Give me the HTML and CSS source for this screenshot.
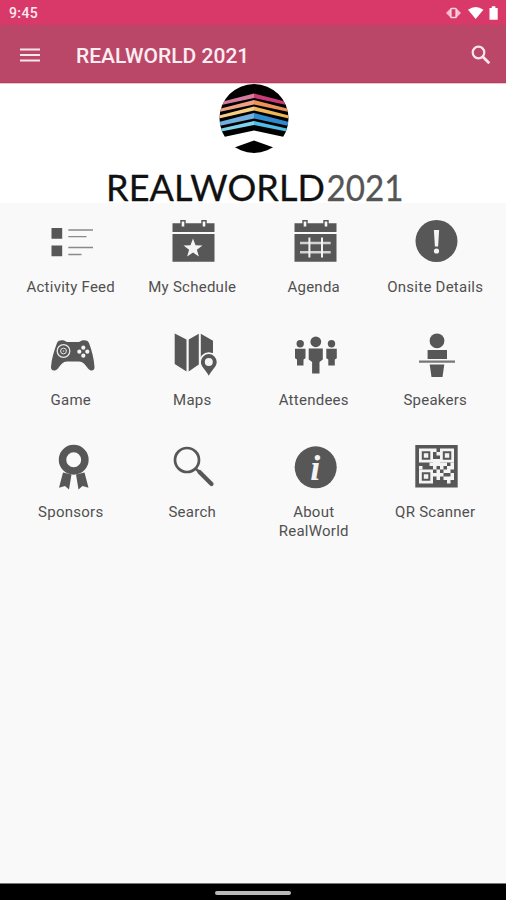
FILE: index.html
```
<!DOCTYPE html>
<html lang="en">
<head>
  <meta charset="UTF-8" />
  <meta name="viewport" content="width=device-width, initial-scale=1.0"/>
  <title>RealWorld 2021</title>
  <link rel="stylesheet" href="styles.css">
</head>
<body>
  <div class="status-bar">
    <span class="time">9:45</span>
    <svg class="status-icons" width="54" height="16" viewBox="0 0 54 16">
      <path d="M1 8 5 4v8zM16 8 12 4v8z" fill="#f9bdd0"/>
      <rect x="5.800" y="3.500" width="5.400" height="9" rx=".8" fill="none" stroke="#fbd3df" stroke-width="1.600"/>
      <path d="M23 4.800q7.700-5.500 15.400 0L30.700 14z" fill="#fff"/>
      <path d="M44.500 3h2.300V1.300h3.600V3h2.300V14.800H44.500z" fill="#fff"/>
    </svg>
  </div>

  <header class="app-bar">
    <svg class="menu-icon" width="20" height="14" viewBox="0 0 20 14">
      <path d="M0 1.500h20M0 7h20M0 12.500h20" stroke="#fbe6ec" stroke-width="2"/>
    </svg>
    <h1>REALWORLD 2021</h1>
    <svg class="search-icon" width="20" height="20" viewBox="0 0 20 20" fill="none" stroke="#fbe6ec">
      <circle cx="7.500" cy="7.500" r="5.800" stroke-width="2.200"/>
      <path d="M11.800 11.800 18.300 18.300" stroke-width="2.700"/>
    </svg>
  </header>

  <div class="banner">
    <svg class="logo" width="70" height="70" viewBox="0 0 70 70">
      <defs>
        <clipPath id="disc"><circle cx="35" cy="34.500" r="34.500"/></clipPath>
      </defs>
      <g clip-path="url(#disc)">
        <path d="M0 0H70V54L35 46.500 0 54z" fill="#000"/>
        <path d="M0 18.500 35 9.500V14L0 21.500z" fill="#d57a9c"/>
        <path d="M70 18.500 35 9.500V14L70 21.500z" fill="#c93a76"/>
        <path d="M0 25 35 16V20.500L0 28z" fill="#f0a182"/>
        <path d="M70 25 35 16V20.500L70 28z" fill="#ee925a"/>
        <path d="M0 31.500 35 22.500V26.500L0 34.500z" fill="#f6cd82"/>
        <path d="M70 31.500 35 22.500V26.500L70 34.500z" fill="#f2b757"/>
        <path d="M0 38 35 29V34.500L0 42z" fill="#70afdf"/>
        <path d="M70 38 35 29V34.500L70 42z" fill="#318acb"/>
        <path d="M0 45 35 37V41L0 48z" fill="#80d3ee"/>
        <path d="M70 45 35 37V41L70 48z" fill="#51bce4"/>
        <path d="M14 64 35 56.500 56 64V70H14z" fill="#000"/>
      </g>
    </svg>
    <svg class="wordmark" width="300" height="30" viewBox="0 0 300 30">
      <text x="1" y="27" textLength="219" fill="#111" stroke="#111">REALWORLD</text>
      <text x="221.500" y="27" textLength="77" lengthAdjust="spacingAndGlyphs" fill="#555" stroke="#555">2021</text>
    </svg>
  </div>

  <main class="menu">
    <a class="item">
      <svg viewBox="0 0 48 48">
        <path d="M2.500 10h10.700v10.700H2.500zM2.500 27.500h10.700v10.700H2.500z"/>
        <path d="M19.300 12H44M19.300 18.700H37.500M19.300 29.500H44M19.300 36.500H32.500" stroke="#8a8a8a" stroke-width="1.300"/>
      </svg>
      <span>Activity Feed</span>
    </a>
    <a class="item">
      <svg viewBox="0 0 48 48">
        <path d="M2.500 5.300h42V14h-42zM2.500 16h42v27.700h-42z"/>
        <path d="M11 2.800h4v6.400h-4zM32 2.800h4v6.400h-4z" fill="#f9f9f9" stroke="#575757" stroke-width="1.400"/>
        <path class="cut" d="M23 20.500 25.500 27.300 32.500 27.500 26.900 31.800 28.900 38.600 23 34.600 17.100 38.600 19.100 31.800 13.500 27.500 20.500 27.300z"/>
      </svg>
      <span>My Schedule</span>
    </a>
    <a class="item">
      <svg viewBox="0 0 48 48">
        <path d="M2.500 5.300h42V14h-42zM2.500 16h42v27.700h-42z"/>
        <path d="M11 2.800h4v6.400h-4zM32 2.800h4v6.400h-4z" fill="#f9f9f9" stroke="#575757" stroke-width="1.400"/>
        <path d="M8 25H38.700M8 34.300H38.700" stroke="#d2d2d2" stroke-width="2.400"/>
        <path d="M17.400 19.500V39.500M30 19.500V39.500" stroke="#f4f4f4" stroke-width="2"/>
      </svg>
      <span>Agenda</span>
    </a>
    <a class="item">
      <svg viewBox="0 0 48 48">
        <circle cx="23.500" cy="23" r="21"/>
        <path class="cut" d="M20.900 12h5.200l-1 16.500h-3.200z"/>
        <circle class="cut" cx="23.500" cy="33" r="2.600"/>
      </svg>
      <span>Onsite Details</span>
    </a>

    <a class="item">
      <svg viewBox="0 0 48 48">
        <path d="M8 12C9 9.500 12 9 15 9.500L18 11H30L33 9.500C36 9 39 9.500 40 12 43 20 45 28 45.500 36 45.500 41 41 40 39 37.500 36 33.500 34 30.500 30 30.500H18C14 30.500 12 33.500 9 37.500 7 40 2 41 2 36 2.500 28 5 20 8 12z"/>
        <g fill="none" stroke="#e8e8e8">
          <circle cx="14.500" cy="20" r="6.300" stroke-width="1.300"/>
          <circle cx="14.500" cy="20" r="2.900" stroke-width="1"/>
        </g>
        <circle cx="14.500" cy="20" r=".8" fill="#ccc"/>
        <g class="cut">
          <circle cx="34.300" cy="16.700" r="2.100"/>
          <circle cx="34.300" cy="24.700" r="2.100"/>
          <circle cx="30.300" cy="20.700" r="2.100"/>
          <circle cx="38.300" cy="20.700" r="2.100"/>
        </g>
      </svg>
      <span>Game</span>
    </a>
    <a class="item">
      <svg viewBox="0 0 48 48">
        <path d="M4.700 2.500 16.500 8.500V40.500L4.700 33zM18.700 8.500 28.800 2.800V33.500L18.700 40.500zM30.800 2.800 43 9.800V31H30.800z"/>
        <path d="M38.800 44.800C36 39 30.900 36 30.900 31a7.900 7.900 0 0 1 15.800 0C46.700 36 41.500 39 38.800 44.800z" stroke="#f9f9f9" stroke-width="3.600" paint-order="stroke"/>
        <circle class="cut" cx="38.800" cy="31" r="4"/>
      </svg>
      <span>Maps</span>
    </a>
    <a class="item">
      <svg viewBox="0 0 48 48">
        <circle cx="8.200" cy="12.700" r="3.700"/>
        <path d="M3 17.800h10.500v9.400l-2 1.400v6H5v-6l-2-1.400z"/>
        <circle cx="23.800" cy="10.800" r="5.400"/>
        <path d="M16.700 17.500h14.100v11l-3.300 2.500v11.500h-7.400V31l-3.400-2.500z"/>
        <circle cx="39.500" cy="12.700" r="3.700"/>
        <path d="M34.300 17.800h10.500v9.400l-2 1.400v6h-6.500v-6l-2-1.400z"/>
      </svg>
      <span>Attendees</span>
    </a>
    <a class="item">
      <svg viewBox="0 0 48 48">
        <circle cx="24" cy="9.800" r="7.400"/>
        <path d="M14.600 19H34v9H14.600zM16.700 33.500h14.600L29.500 46h-11z"/>
        <path d="M6 30.700H42" stroke="#777" stroke-width="2.200"/>
      </svg>
      <span>Speakers</span>
    </a>

    <a class="item">
      <svg viewBox="0 0 48 48">
        <path d="M14 29.500 22.500 31.500 20 46.500 16 43 10 44.800zM35.500 29.500 27 31.500 29.500 46.500 33.500 43 39.500 44.800z"/>
        <circle cx="24.700" cy="16.800" r="11.200" fill="none" stroke="#575757" stroke-width="7.500"/>
      </svg>
      <span>Sponsors</span>
    </a>
    <a class="item">
      <svg viewBox="0 0 48 48">
        <circle cx="17" cy="17" r="12" fill="none" stroke="#575757" stroke-width="2.700"/>
        <path d="M26 26 30 29.500" stroke="#575757" stroke-width="2.500"/>
        <path d="M29.500 29 41.500 41" stroke="#575757" stroke-width="4.200" stroke-linecap="round"/>
      </svg>
      <span>Search</span>
    </a>
    <a class="item">
      <svg viewBox="0 0 48 48">
        <circle cx="23.700" cy="24.300" r="21"/>
        <text class="info" x="23.300" y="36.500" text-anchor="middle">i</text>
      </svg>
      <span>About<br>RealWorld</span>
    </a>
    <a class="item">
      <svg viewBox="0 0 48 48">
        <path d="M2.300 2h42.400v42.400H2.300z"/>
        <path class="cut" d="M6 5.500h14v14H6zM27 5.500h14v14H27zM6 26.500h14v14H6z"/>
        <path d="M9.800 9.300h6.500v6.500H9.800zM30.800 9.300h6.500v6.500h-6.500zM9.800 30.300h6.500v6.500H9.800z" fill="#f4f4f4" stroke="#575757" stroke-width="2"/>
        <path class="cut" d="M20 5.500h3.500V9H20zM23.500 9H27v3.500h-3.500zM20 16h7v7h-3.500v3.500H20V23h-3.500v-3.500H20zM6 23h3.500v3.500H6zM20 30h3.500v-3.500H27V30h3.500v3.500H27V37h-3.500v-3.500H20zM27 19.500h7V23h-3.500v3.500H27zM37.500 19.500H41v7h-3.500zM34 23h3.500v3.500H34zM30.500 26.500H34V30h-3.500zM34 33.500h-3.500V37H34v3.500h3.500V37H41v-7h-3.500v-3.500H34V30h3.500v3.500z"/>
      </svg>
      <span>QR Scanner</span>
    </a>
  </main>

  <footer class="nav-bar">
    <div class="home-pill"></div>
  </footer>
</body>
</html>
```
FILE: styles.css
```
* {
  margin: 0;
  padding: 0;
  box-sizing: border-box;
}

body {
  height: 900px;
  display: flex;
  flex-direction: column;
  background-color: #f9f9f9;
  font-family: Roboto, sans-serif;
  overflow: hidden;
}

.status-bar {
  height: 25px;
  padding: 0 7px 0 9px;
  display: flex;
  align-items: center;
  justify-content: space-between;
  background-color: #d83969;
}

.time {
  padding-top: 2px;
  color: #fde9ef;
  font-size: 14px;
  font-weight: 500;
  letter-spacing: 0.4px;
  line-height: 25px;
}

.app-bar {
  height: 58px;
  padding: 3px 15px 0 20px;
  display: flex;
  align-items: center;
  background-color: #bb4768;
  border-bottom: 1px solid #b43d60;
}

.app-bar h1 {
  flex: 1;
  margin-left: 36px;
  padding-top: 1px;
  color: #fdeef2;
  font-size: 21px;
  font-weight: 500;
}

.banner {
  height: 120px;
  display: flex;
  flex-direction: column;
  align-items: center;
  background-color: #fff;
  border-top: 1px solid #f0c5d1;
}

.logo {
  margin-left: 2px;
  flex: none;
}

.wordmark {
  margin: 20px 0 0 4px;
  flex: none;
  overflow: visible;
  font-family: Lato, sans-serif;
  font-size: 36px;
  stroke-width: 0.3px;
}

.menu {
  flex: 1;
  padding: 0 10px;
  display: grid;
  grid-template-columns: repeat(4, 1fr);
  grid-auto-rows: 112.5px;
}

.item {
  padding-top: 15px;
  display: flex;
  flex-direction: column;
  align-items: center;
  color: #505050;
  font-size: 15px;
  line-height: 18.5px;
  letter-spacing: 0.25px;
  text-align: center;
}

.item svg {
  width: 48px;
  height: 48px;
  margin: 0 0 12px 4px;
  flex: none;
  fill: #575757;
}

.item .cut {
  fill: #f4f4f4;
}

.item .info {
  fill: #f4f4f4;
  font-family: "Liberation Serif", serif;
  font-size: 36px;
  font-weight: bold;
  font-style: italic;
}

.nav-bar {
  height: 17px;
  display: flex;
  justify-content: center;
  background-color: #000;
  border-top: 1px solid #777;
}

.home-pill {
  width: 76px;
  height: 4px;
  margin-top: 7px;
  border-radius: 2px;
  background-color: #b9b9b9;
}
```
